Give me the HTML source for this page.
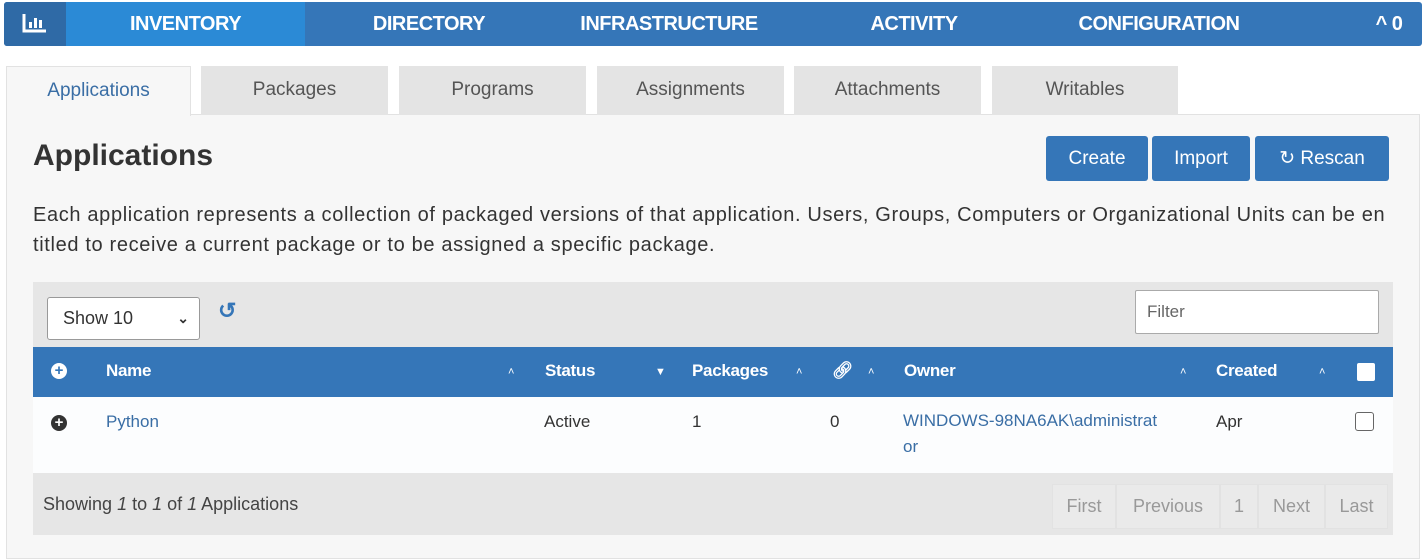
<!DOCTYPE html>
<html><head><meta charset="utf-8"><style>
*{box-sizing:border-box;margin:0;padding:0}
body{width:1428px;height:553px;background:#fff;font-family:"Liberation Sans",sans-serif;position:relative;overflow:hidden;color:#333}
.a{position:absolute}
.nav{left:4px;top:2px;width:1418px;height:44px;background:#3576b8;border-radius:3px;overflow:hidden}
.nav div{position:absolute;top:0;height:44px;line-height:44px;color:#fff;font-size:20px;font-weight:bold;letter-spacing:-.5px;text-align:center}
.tab{top:66px;height:49px;background:#e4e4e4;font-size:19px;color:#555;text-align:center;line-height:48px}
.panel{left:6px;top:114px;width:1414px;height:445px;background:#f7f7f7;border:1px solid #e2e2e2}
.btn{top:136px;height:45px;background:#3576b8;color:#fff;font-size:19px;border-radius:3px;text-align:center;line-height:45px}
.th{color:#fff;font-size:17px;font-weight:bold;top:361px;letter-spacing:-.3px}
.car{color:#fff;font-size:11px;top:366px}
.td{font-size:17px;top:412px}
.pg{top:484px;height:45px;line-height:42px;font-size:18px;color:#999;text-align:center;background:#eaeaea;border:1px solid #e2e2e2}
</style></head><body>
<div class="a nav">
<div style="left:0;width:62px;background:#2f6aa6"><svg width="26" height="20" viewBox="0 0 26 20" style="margin-top:11px"><path d="M2 1V18H24" stroke="#fff" stroke-width="3" fill="none"/><rect x="7" y="9" width="3" height="6" fill="#fff"/><rect x="12" y="5" width="3" height="10" fill="#fff"/><rect x="17" y="7" width="3" height="8" fill="#fff"/></svg></div>
<div style="left:62px;width:239px;background:#2b8ad6">INVENTORY</div>
<div style="left:340px;width:170px">DIRECTORY</div>
<div style="left:560px;width:210px">INFRASTRUCTURE</div>
<div style="left:840px;width:140px">ACTIVITY</div>
<div style="left:1045px;width:220px">CONFIGURATION</div>
<div style="left:1360px;width:50px">^ 0</div>
</div>
<div class="a panel"></div>
<div class="a tab" style="left:6px;width:185px;background:#f7f7f7;border:1px solid #e2e2e2;border-bottom:none;color:#3a6ea5;height:50px">Applications</div>
<div class="a tab" style="left:201px;width:187px">Packages</div>
<div class="a tab" style="left:399px;width:187px">Programs</div>
<div class="a tab" style="left:597px;width:187px">Assignments</div>
<div class="a tab" style="left:794px;width:187px">Attachments</div>
<div class="a tab" style="left:992px;width:186px">Writables</div>
<div class="a" style="left:33px;top:139px;font-size:30px;font-weight:bold;color:#333">Applications</div>
<div class="a btn" style="left:1046px;width:102px">Create</div>
<div class="a btn" style="left:1152px;width:98px">Import</div>
<div class="a btn" style="left:1255px;width:134px">&#x21bb; Rescan</div>
<div class="a" style="left:33px;top:200px;width:1390px;font-size:20px;letter-spacing:.65px;line-height:30px;color:#333;white-space:nowrap">Each application represents a collection of packaged versions of that application. Users, Groups, Computers or Organizational Units can be en<br>titled to receive a current package or to be assigned a specific package.</div>
<div class="a" style="left:33px;top:282px;width:1360px;height:253px;background:#e6e6e6"></div>
<div class="a" style="left:47px;top:297px;width:153px;height:43px;background:#fff;border:1px solid #999;border-radius:3px;font-size:18px;line-height:41px;padding-left:15px">Show 10<span style="position:absolute;right:10px;font-size:14px;font-weight:bold">&#x2304;</span></div>
<div class="a" style="left:218px;top:298px;color:#3576b8;font-size:22px;font-weight:bold">&#x21ba;</div>
<div class="a" style="left:1135px;top:290px;width:244px;height:44px;background:#fff;border:1px solid #aaa;border-radius:2px;font-size:17px;line-height:42px;padding-left:11px;color:#666">Filter</div>
<div class="a" style="left:33px;top:347px;width:1360px;height:50px;background:#3576b8"></div>
<div class="a" style="left:33px;top:397px;width:1360px;height:76px;background:#fcfdfe"></div>
<div class="a" style="left:51px;top:363px;width:16px;height:16px;border-radius:50%;background:#fff;color:#3576b8;font-size:15px;line-height:15px;text-align:center;font-weight:bold">+</div>
<div class="a th" style="left:106px">Name</div><div class="a car" style="left:508px">&#x2c4;</div>
<div class="a th" style="left:545px">Status</div><div class="a car" style="left:655px">&#x25bc;</div>
<div class="a th" style="left:692px">Packages</div><div class="a car" style="left:796px">&#x2c4;</div>
<div class="a th" style="left:832px">&#x1f517;&#xfe0e;</div><div class="a car" style="left:868px">&#x2c4;</div>
<div class="a th" style="left:904px">Owner</div><div class="a car" style="left:1180px">&#x2c4;</div>
<div class="a th" style="left:1216px">Created</div><div class="a car" style="left:1319px">&#x2c4;</div>
<div class="a" style="left:1357px;top:363px;width:18px;height:18px;background:#fff;border-radius:2px"></div>
<div class="a" style="left:51px;top:415px;width:16px;height:16px;border-radius:50%;background:#333;color:#fff;font-size:15px;line-height:15px;text-align:center;font-weight:bold">+</div>
<div class="a td" style="left:106px;color:#3a6ea5">Python</div>
<div class="a td" style="left:544px">Active</div>
<div class="a td" style="left:692px">1</div>
<div class="a td" style="left:830px">0</div>
<div class="a td" style="left:903px;color:#3a6ea5;line-height:26px;top:408px;width:290px">WINDOWS-98NA6AK\administrat<br>or</div>
<div class="a td" style="left:1216px">Apr</div>
<div class="a" style="left:1355px;top:412px;width:19px;height:19px;border:1.5px solid #666;border-radius:3px;background:#fff"></div>
<div class="a" style="left:43px;top:494px;font-size:18px;color:#444">Showing <i>1</i> to <i>1</i> of <i>1</i> Applications</div>
<div class="a pg" style="left:1052px;width:64px">First</div>
<div class="a pg" style="left:1116px;width:104px">Previous</div>
<div class="a pg" style="left:1220px;width:38px">1</div>
<div class="a pg" style="left:1258px;width:67px">Next</div>
<div class="a pg" style="left:1325px;width:63px">Last</div>
</body></html>
